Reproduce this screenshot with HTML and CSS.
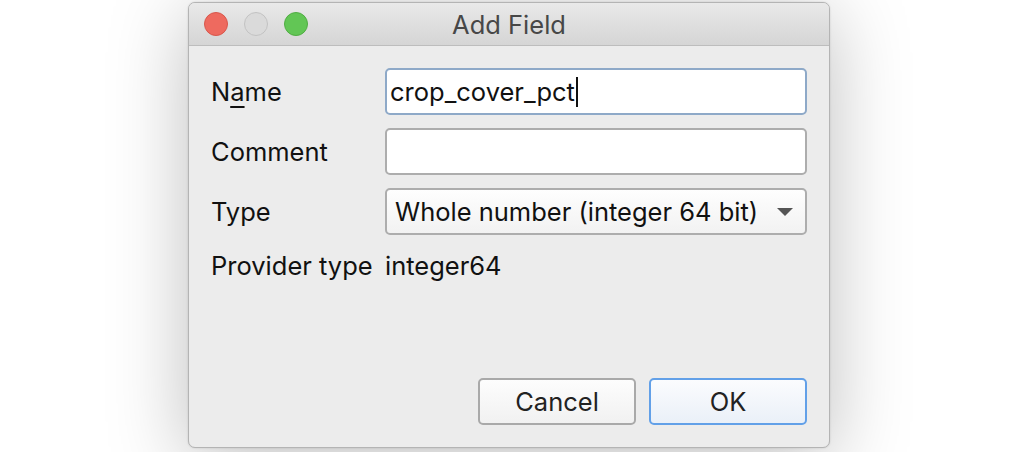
FILE: index.html
```html
<!DOCTYPE html>
<html>
<head>
<meta charset="utf-8">
<link rel="stylesheet" href="styles.css">
</head>
<body>
<div class="window">
  <div class="titlebar">
    <div class="lights">
      <span class="light red"></span>
      <span class="light grey"></span>
      <span class="light green"></span>
    </div>
    <div class="title">Add Field</div>
  </div>
  <div class="content">
    <div class="form">
      <div class="label">N<span class="mn">a</span>me</div>
      <div class="field focus"><span class="value">crop_cover_pct</span><span class="caret"></span></div>
      <div class="label">Comment</div>
      <div class="field"></div>
      <div class="label">Type</div>
      <div class="combo"><span class="value">Whole number (integer 64 bit)</span><span class="arrow"></span></div>
      <div class="label top">Provider type</div>
      <div class="plain">integer64</div>
    </div>
    <div class="buttons">
      <div class="btn">Cancel</div>
      <div class="btn default">OK</div>
    </div>
  </div>
</div>
</body>
</html>
```
FILE: styles.css
```css
html, body {
  margin: 0;
  padding: 0;
  background: #ffffff;
}
body {
  width: 1014px;
  height: 452px;
  overflow: hidden;
  padding: 2px 0 0 188px;
  box-sizing: border-box;
  font-family: "Inter", "Liberation Sans", sans-serif;
  color: #111111;
}
.window {
  width: 642px;
  height: 446px;
  box-sizing: border-box;
  border: 1px solid #b4b4b4;
  border-radius: 7px;
  background: #ececec;
  box-shadow: 0 12px 80px rgba(0, 0, 0, 0.26), 0 0 2px rgba(0, 0, 0, 0.15);
  display: flex;
  flex-direction: column;
  overflow: hidden;
}
.titlebar {
  height: 42px;
  flex: none;
  border-bottom: 1px solid #bdbdbd;
  background: linear-gradient(#e9e9e9, #d5d5d5);
  display: flex;
  align-items: center;
  position: relative;
}
.lights {
  display: flex;
  gap: 16px;
  padding-left: 15px;
}
.light {
  width: 22px;
  height: 22px;
  border-radius: 50%;
  border: 1px solid;
}
.red { background: #ee6a5f; border-color: #d8574c; }
.grey { background: #dadada; border-color: #c2c2c2; }
.green { background: #62c655; border-color: #50ad43; }
.title {
  position: absolute;
  left: 0;
  right: 0;
  top: 0;
  bottom: 0;
  display: flex;
  align-items: center;
  justify-content: center;
  font-size: 25.5px;
  color: #474747;
  pointer-events: none;
}
.content {
  flex: 1;
  display: flex;
  flex-direction: column;
  padding: 22px;
}
.form {
  display: grid;
  grid-template-columns: 174px 1fr;
  grid-auto-rows: 47px;
  row-gap: 13px;
  align-items: center;
}
.label {
  font-size: 25.5px;
  color: #111111;
}
.mn {
  text-decoration: underline;
  text-underline-offset: 5px;
  text-decoration-thickness: 2px;
}
.field, .combo {
  height: 47px;
  box-sizing: border-box;
  border: 2px solid #adadad;
  border-radius: 5px;
  background: #ffffff;
  display: flex;
  align-items: center;
  font-size: 25.5px;
}
.field.focus {
  border-color: #8ea9c8;
  padding-left: 3px;
}
.caret {
  width: 2px;
  height: 30px;
  background: #111;
  margin-left: 1px;
}
.combo {
  background: linear-gradient(#fefefe, #f2f2f2);
  padding: 0 12px 0 8px;
  justify-content: space-between;
}
.arrow {
  width: 0;
  height: 0;
  border-left: 8px solid transparent;
  border-right: 8px solid transparent;
  border-top: 8px solid #555555;
}
.plain {
  font-size: 25.5px;
  align-self: start;
  margin-top: 2px;
}
.label.top {
  align-self: start;
  margin-top: 2px;
}
.buttons {
  margin-top: auto;
  display: flex;
  justify-content: flex-end;
  gap: 13px;
}
.btn {
  width: 158px;
  height: 47px;
  box-sizing: border-box;
  border: 2px solid #a9a9a9;
  border-radius: 5px;
  background: linear-gradient(#fdfdfd, #f1f1f1);
  display: flex;
  align-items: center;
  justify-content: center;
  font-size: 25.5px;
  color: #222222;
}
.btn.default {
  border-color: #62a0e8;
  background: linear-gradient(#fbfcfe, #eaf0f8);
}
```
